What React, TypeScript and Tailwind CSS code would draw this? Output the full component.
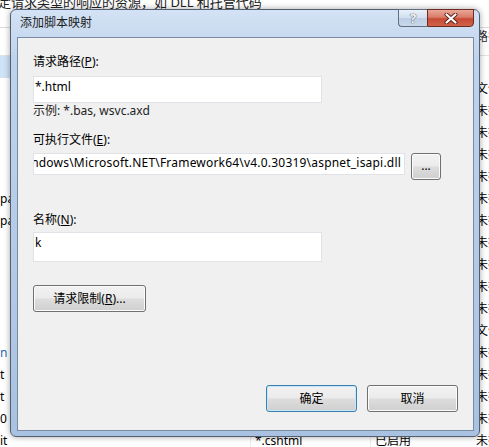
import React from "react"
import clsx from "clsx"

type Row = { name: string; path?: string; state?: string; type: string; blue?: boolean }

// only the bits of the list that peek out from behind the dialog
const rows: Row[] = [
  { name: '', type: '' },
  { name: '', type: '文件' },
  { name: '', type: '未指定' },
  { name: '', type: '未指定' },
  { name: '', type: '未指定' },
  { name: '', type: '未指定' },
  { name: 'pa', type: '未指定' },
  { name: 'pa', type: '未指定' },
  { name: '', type: '未指定' },
  { name: '', type: '未指定' },
  { name: '', type: '未指定' },
  { name: '', type: '未指定' },
  { name: '', type: '文件' },
  { name: 'n', type: '未指定', blue: true },
  { name: 't', type: '未指定' },
  { name: 't', type: '未指定' },
  { name: '0', type: '未指定' },
  { name: 'it', path: '*.cshtml', state: '已启用', type: '未指定' },
]

function Background() {
  return (
    <div className="flex flex-col whitespace-nowrap">
      <div className="h-[28px] overflow-hidden border-b border-[#dcdcdc]">
        <p className="-ml-[2px] -mt-[6px] text-[13px] leading-4 text-[#222]">定请求类型的响应的资源，如 DLL 和托管代码</p>
      </div>
      <div className="flex h-[28px] border-b border-[#e2e2e2] pt-[1px] text-[#333]">
        <div className="w-[472px] shrink-0" />
        <div className="pl-[4px]">路径类型</div>
      </div>
      {rows.map((row, i) => (
        <div key={i} className="flex h-[22px] items-center">
          <div className={clsx('flex h-full w-[250px] shrink-0 items-center', i === 0 && 'bg-[#cfe3f7]', row.blue && 'text-[#2a6bb5]')}>{row.name}</div>
          <div className="flex h-full w-[120px] shrink-0 items-center border-l border-[#ececec] pl-[4px]">{row.path}</div>
          <div className="flex h-full w-[102px] shrink-0 items-center border-l border-[#ececec] pl-[4px]">{row.state}</div>
          <div className="flex h-full shrink-0 items-center pl-[4px]">{row.type}</div>
        </div>
      ))}
    </div>
  )
}

function WinButton({ children, primary, className }: { children: React.ReactNode; primary?: boolean; className?: string }) {
  return (
    <button
      className={clsx(
        'flex items-center justify-center rounded-[3px] border text-[12px] leading-4 text-black',
        'bg-[linear-gradient(180deg,#f2f2f2_0%,#ebebeb_48%,#dddddd_52%,#cfcfcf_100%)]',
        primary ? 'border-[#3c7fb1] shadow-[inset_0_0_0_1px_#c4e8f8]' : 'border-[#707070] shadow-[inset_0_0_0_1px_#fbfbfb]',
        className
      )}
    >
      {children}
    </button>
  )
}

function TextBox({ value, className, end }: { value: string; className?: string; end?: boolean }) {
  return (
    <div className={clsx('flex items-start overflow-hidden whitespace-nowrap border border-[#dfe2e6] bg-white pl-[1px] pr-[3px] text-black', end && 'justify-end', className)}>
      {value}
    </div>
  )
}

function Dialog() {
  return (
    <div className="absolute left-[10px] top-[9px] flex h-[428px] w-[470px] flex-col rounded-[6px] border border-[#535f70] bg-[linear-gradient(180deg,#d3e2f4_0%,#bed3ec_12%,#b3cae7_60%,#a9c2e2_100%)] pb-[5px] pl-[6px] pr-[5px] shadow-[0_0_6px_rgba(0,0,0,0.35)]">
      <div className="flex h-[27px] shrink-0 items-start justify-between">
        <span className="ml-[3px] mt-[5px] text-[12px] leading-4 text-[#1b1b1b]">添加脚本映射</span>
        <div className="-mt-px flex">
          <div className="flex h-[18px] w-[29px] items-center justify-center rounded-bl-[4px] border border-r-0 border-[#5f6e83] bg-[linear-gradient(180deg,#e9f0f8_0%,#d2dfee_50%,#bccee4_52%,#c9d8ea_100%)]">
            <span className="text-[13px] font-bold leading-none text-[#f4f7fb] [text-shadow:0_0_1px_#3a4656,0_0_1px_#3a4656]">?</span>
          </div>
          <div className="flex h-[18px] w-[47px] items-center justify-center rounded-br-[4px] border border-[#6e2a20] bg-[linear-gradient(180deg,#e9a898_0%,#d97c68_45%,#c74a35_55%,#d0624a_100%)]">
            <svg width="14" height="11" viewBox="0 0 14 11">
              <path d="M2.5 1.5 L11.5 9.5 M11.5 1.5 L2.5 9.5" stroke="#5a1f16" strokeWidth="4" strokeLinecap="round" />
              <path d="M2.5 1.5 L11.5 9.5 M11.5 1.5 L2.5 9.5" stroke="#ffffff" strokeWidth="2.2" strokeLinecap="round" />
            </svg>
          </div>
        </div>
      </div>
      <div className="flex flex-1 flex-col border border-[#7a8ba1] bg-[#f0f0f0] pl-[15px] pr-[15px] text-[12px] leading-4 text-black">
        <label className="mt-[16px]">请求路径(<u>P</u>):</label>
        <TextBox value="*.html" className="mt-[6px] h-[27px] w-[289px] pt-[2px]" />
        <p className="mt-0 text-[#1e1e1e]">示例: *.bas, wsvc.axd</p>
        <label className="mt-[13px]">可执行文件(<u>E</u>):</label>
        <div className="mt-[5px] flex items-start">
          <TextBox value="C:\Windows\Microsoft.NET\Framework64\v4.0.30319\aspnet_isapi.dll" end className="h-[22px] w-[372px] pt-[1px] tracking-[0.2px]" />
          <WinButton className="ml-[6px] h-[27px] w-[30px] pb-[2px] text-[9px]">...</WinButton>
        </div>
        <label className="mt-[32px]">名称(<u>N</u>):</label>
        <TextBox value="k" className="mt-[4px] h-[30px] w-[289px] pt-[2px]" />
        <WinButton className="mt-[23px] h-[27px] w-[113px]">请求限制(<u>R</u>)...</WinButton>
        <div className="mt-[73px] flex justify-end gap-[10px]">
          <WinButton primary className="h-[27px] w-[91px]">确定</WinButton>
          <WinButton className="h-[27px] w-[91px]">取消</WinButton>
        </div>
      </div>
    </div>
  )
}

export default function App() {
  return (
    <div className="relative h-[447px] w-[489px] overflow-hidden bg-white font-['Noto_Sans','Noto_Sans_CJK_SC',sans-serif] text-[12px] leading-4 text-black">
      <Background />
      <Dialog />
    </div>
  )
}
